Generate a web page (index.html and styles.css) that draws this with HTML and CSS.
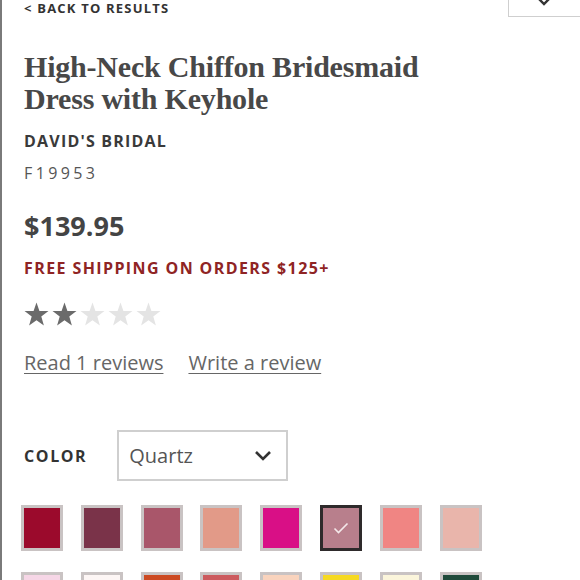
FILE: index.html
```html
<!DOCTYPE html>
<html>
<head>
<meta charset="utf-8">
<link rel="stylesheet" href="styles.css">
</head>
<body>
<div class="page">
  <div class="topbar">
    <a class="back" href="#">&lt; BACK TO RESULTS</a>
    <div class="size-box">
      <svg width="12" height="8" viewBox="0 0 12 8"><path d="M1 1 L6 6 L11 1" fill="none" stroke="#333" stroke-width="2.4"/></svg>
    </div>
  </div>
  <h1 class="title">High-Neck Chiffon Bridesmaid Dress with Keyhole</h1>
  <div class="brand">DAVID'S BRIDAL</div>
  <div class="sku">F19953</div>
  <div class="price">$139.95</div>
  <div class="shipping">FREE SHIPPING ON ORDERS $125+</div>
  <div class="stars">
    <svg class="star on" viewBox="0 0 24 24"><path d="M12 0.5 L14.8 8.6 L23.5 8.7 L16.6 13.9 L19.1 22.5 L12 17.4 L4.9 22.5 L7.4 13.9 L0.5 8.7 L9.2 8.6 Z"/></svg>
    <svg class="star on" viewBox="0 0 24 24"><path d="M12 0.5 L14.8 8.6 L23.5 8.7 L16.6 13.9 L19.1 22.5 L12 17.4 L4.9 22.5 L7.4 13.9 L0.5 8.7 L9.2 8.6 Z"/></svg>
    <svg class="star off" viewBox="0 0 24 24"><path d="M12 0.5 L14.8 8.6 L23.5 8.7 L16.6 13.9 L19.1 22.5 L12 17.4 L4.9 22.5 L7.4 13.9 L0.5 8.7 L9.2 8.6 Z"/></svg>
    <svg class="star off" viewBox="0 0 24 24"><path d="M12 0.5 L14.8 8.6 L23.5 8.7 L16.6 13.9 L19.1 22.5 L12 17.4 L4.9 22.5 L7.4 13.9 L0.5 8.7 L9.2 8.6 Z"/></svg>
    <svg class="star off" viewBox="0 0 24 24"><path d="M12 0.5 L14.8 8.6 L23.5 8.7 L16.6 13.9 L19.1 22.5 L12 17.4 L4.9 22.5 L7.4 13.9 L0.5 8.7 L9.2 8.6 Z"/></svg>
  </div>
  <div class="reviews">
    <a href="#">Read 1 reviews</a>
    <a href="#">Write a review</a>
  </div>
  <div class="color-row">
    <span class="color-label">COLOR</span>
    <div class="select">
      <span>Quartz</span>
      <svg width="18" height="11" viewBox="0 0 18 11"><path d="M2 2 L9 9 L16 2" fill="none" stroke="#333" stroke-width="2.6"/></svg>
    </div>
  </div>
  <div class="swatches">
    <div class="sw"><i style="background:#9b0a2c"></i></div>
    <div class="sw"><i style="background:#7a3349"></i></div>
    <div class="sw"><i style="background:#a9566a"></i></div>
    <div class="sw"><i style="background:#e29a88"></i></div>
    <div class="sw"><i style="background:#d90f86"></i></div>
    <div class="sw sel"><i style="background:#b87f8c"><svg width="16" height="12" viewBox="0 0 16 12"><path d="M1.5 6.5 L5.5 10.5 L14.5 1.5" fill="none" stroke="#f4e8ea" stroke-width="1.6"/></svg></i></div>
    <div class="sw"><i style="background:#f08583"></i></div>
    <div class="sw"><i style="background:#e9b5ab"></i></div>
    <div class="sw"><i style="background:#f6d6e6"></i></div>
    <div class="sw"><i style="background:#fdf6f5"></i></div>
    <div class="sw"><i style="background:#cc4a22"></i></div>
    <div class="sw"><i style="background:#cc5a5e"></i></div>
    <div class="sw"><i style="background:#f9d3bd"></i></div>
    <div class="sw"><i style="background:#f6d921"></i></div>
    <div class="sw"><i style="background:#fbf5db"></i></div>
    <div class="sw"><i style="background:#1f4a3a"></i></div>
  </div>
</div>
</body>
</html>
```
FILE: styles.css
```css
html, body {
  margin: 0;
  padding: 0;
  background: #fff;
}
body {
  font-family: "Open Sans", "Liberation Sans", sans-serif;
  color: #444;
  overflow: hidden;
}
.page {
  border-left: 2px solid #7a7a7a;
  min-height: 100vh;
  padding-left: 22px;
  box-sizing: border-box;
}
.topbar {
  display: flex;
  justify-content: space-between;
  align-items: flex-start;
  height: 16px;
}
.back {
  font-size: 13px;
  line-height: 16px;
  font-weight: 700;
  letter-spacing: 1.2px;
  color: #333;
  text-decoration: none;
}
.size-box {
  width: 72px;
  height: 31px;
  margin-top: -14px;
  border: 1px solid #cfcfcf;
  border-right: none;
  display: flex;
  justify-content: center;
  align-items: flex-end;
  padding-bottom: 12px;
  box-sizing: border-box;
  padding-right: 2px;
}
.size-box svg { display: block; margin-bottom: -2px; }
.title {
  font-family: "Liberation Serif", serif;
  font-weight: 700;
  font-size: 30px;
  line-height: 32px;
  color: #484848;
  margin: 35px 0 0;
  width: 440px;
  letter-spacing: -0.2px;
}
.brand {
  margin-top: 16px;
  font-size: 16px;
  line-height: 20px;
  font-weight: 700;
  letter-spacing: 1.2px;
  color: #3a3a3a;
}
.sku {
  margin-top: 12px;
  font-size: 16px;
  line-height: 20px;
  letter-spacing: 3.4px;
  color: #555;
}
.price {
  margin-top: 27px;
  font-size: 27px;
  line-height: 32px;
  font-weight: 700;
  color: #444;
}
.shipping {
  margin-top: 16px;
  font-size: 16px;
  line-height: 20px;
  font-weight: 700;
  letter-spacing: 1.4px;
  color: #8f2424;
}
.stars {
  margin-top: 24px;
  display: flex;
  gap: 3px;
  height: 25px;
}
.star { width: 25px; height: 25px; display: block; }
.star.on { fill: #6b6b6b; }
.star.off { fill: #e4e4e4; }
.reviews {
  margin-top: 22px;
  display: flex;
  gap: 25px;
}
.reviews a {
  font-size: 20px;
  line-height: 28px;
  color: #666;
  text-decoration: underline;
  text-underline-offset: 3px;
  text-decoration-thickness: 1px;
}
.color-row {
  margin-top: 53px;
  display: flex;
  align-items: center;
  gap: 30px;
}
.color-label {
  font-size: 16px;
  font-weight: 700;
  letter-spacing: 1.6px;
  color: #333;
}
.select {
  width: 171px;
  height: 51px;
  box-sizing: border-box;
  border: 2px solid #cfcfcf;
  display: flex;
  align-items: center;
  justify-content: space-between;
  padding: 0 14px 0 10px;
  font-size: 20px;
  color: #555;
}
.select svg { display: block; }
.swatches {
  margin-top: 24px;
  display: grid;
  grid-template-columns: repeat(8, 42px);
  column-gap: 17.8px;
  row-gap: 21px;
  margin-left: -3px;
}
.sw {
  width: 42px;
  height: 46px;
  box-sizing: border-box;
  border: 3px solid #c9c3c3;
}
.sw i {
  display: flex;
  width: 100%;
  height: 100%;
  align-items: center;
  justify-content: center;
}
.sw.sel { border-color: #2e2a2b; }
```
